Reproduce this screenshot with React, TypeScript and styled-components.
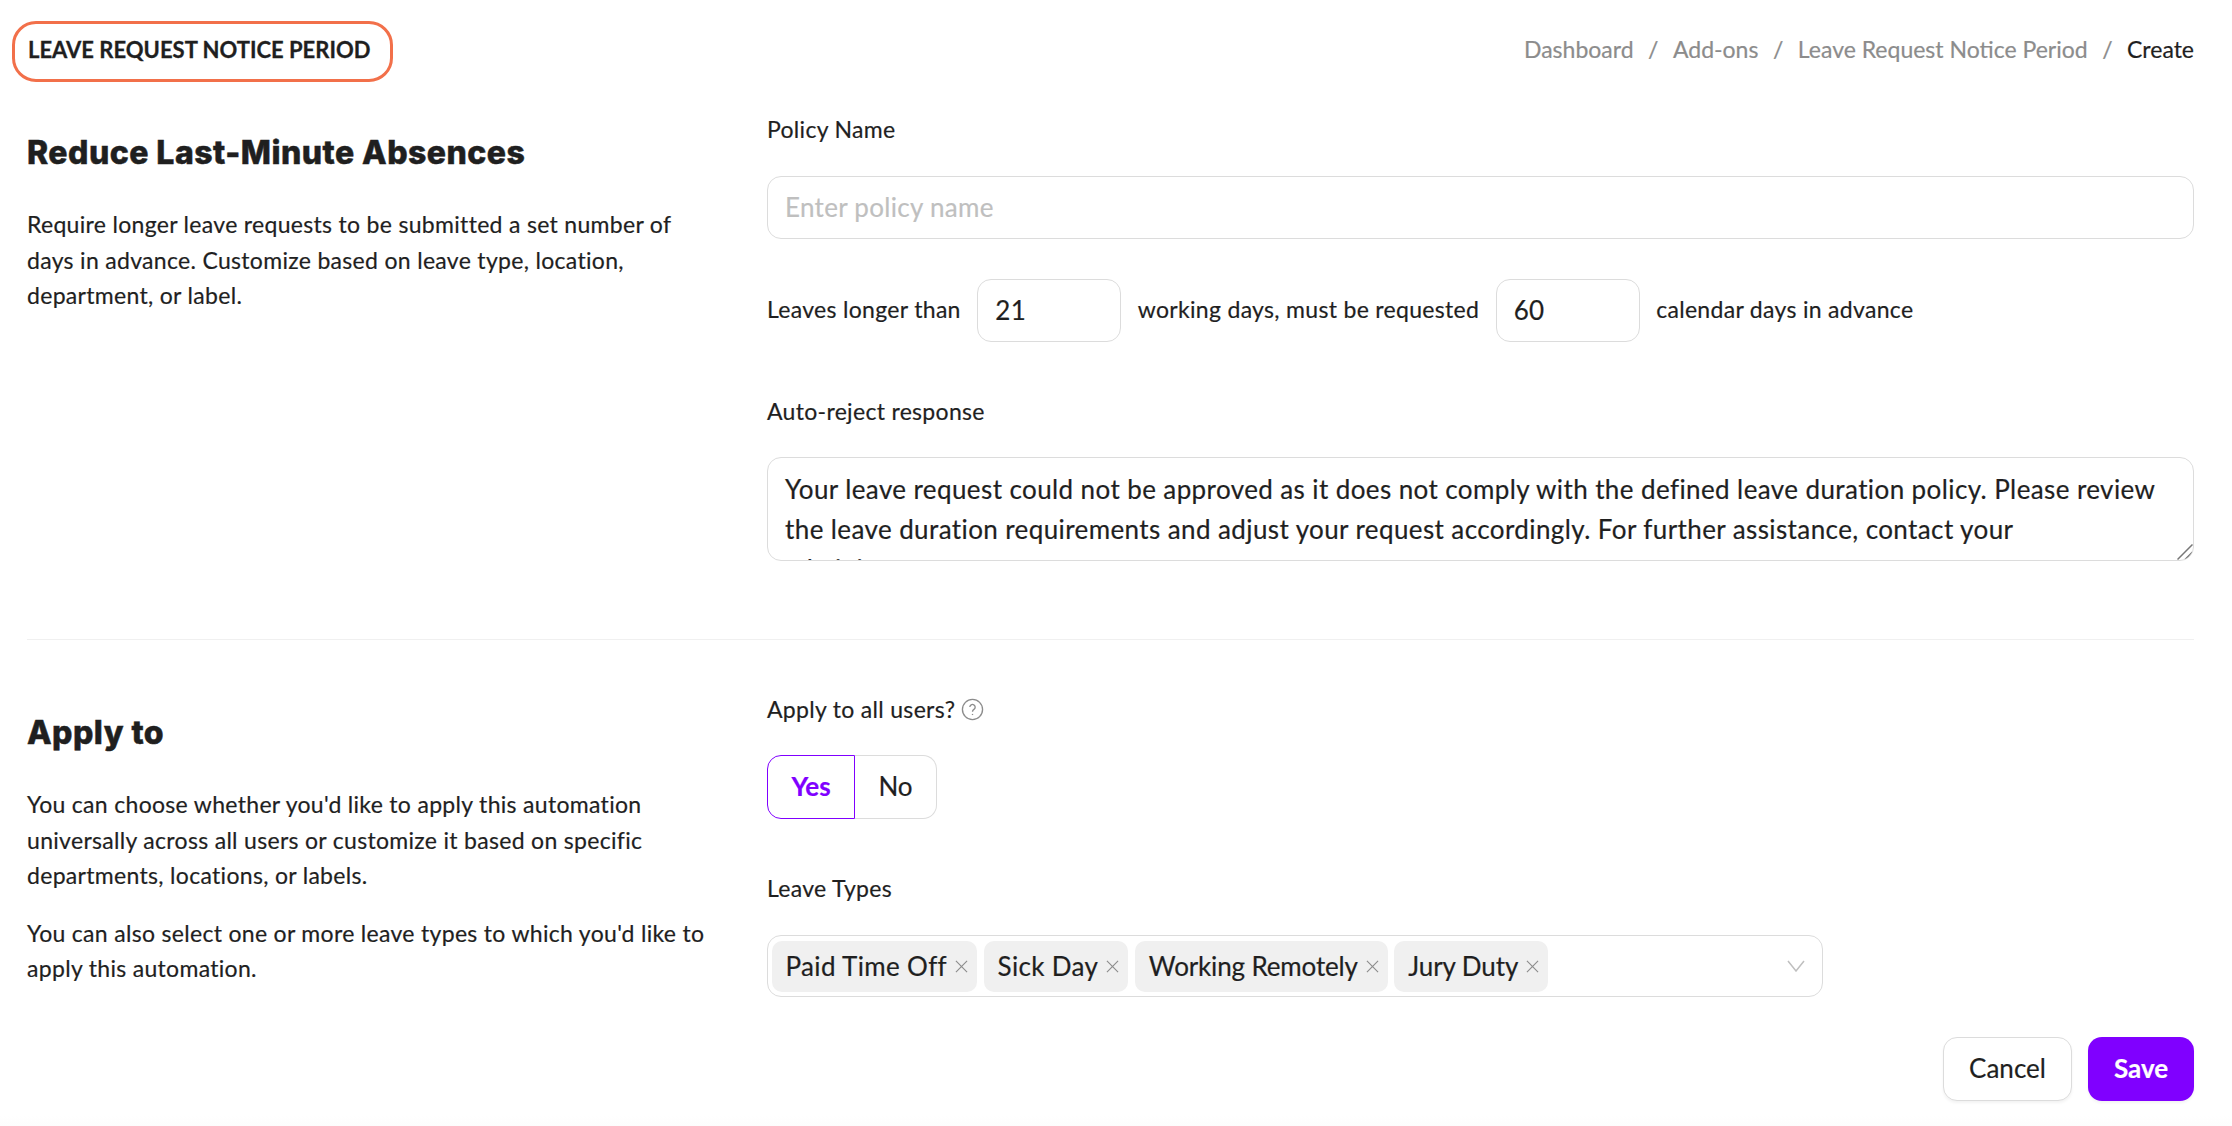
import React from "react";
import styled, { createGlobalStyle } from "styled-components";

const GlobalStyle = createGlobalStyle`
  * { box-sizing: border-box; }
  html, body { margin: 0; padding: 0; background: #fff; }
  body {
    font-family: "Lato", "Liberation Sans", sans-serif;
    color: #1f1f1f;
    -webkit-text-stroke: 0.2px currentColor;
  }
`;

const Page = styled.div`
  width: 2232px;
  height: 1126px;
  padding: 21px 38px 0 12px;
  overflow: hidden;
  background: linear-gradient(#fff 1116px, #fdfdfd);
`;

const Header = styled.div`
  display: flex;
  justify-content: space-between;
  align-items: center;
  height: 61px;
`;

const TitleBadge = styled.div`
  width: 381px;
  height: 61px;
  padding: 0 0 4px 13px;
  display: flex;
  align-items: center;
  border: 3px solid #f2704a;
  border-radius: 24px;
  font-size: 22px;
  font-weight: 700;
  white-space: nowrap;
  -webkit-text-stroke: 0.3px currentColor;
`;

const Breadcrumbs = styled.div`
  display: flex;
  align-items: center;
  gap: 14.5px;
  padding-bottom: 5px;
  font-size: 23px;
  color: #8c8c8c;
`;

const Crumb = styled.span<{ $current?: boolean }>`
  color: ${(p) => (p.$current ? "#1f1f1f" : "#8c8c8c")};
`;

const Section = styled.div`
  display: grid;
  grid-template-columns: 740px 1fr;
  margin-left: 15px;
`;

const FirstSection = styled(Section)`
  padding-top: 34px;
  padding-bottom: 78px;
  border-bottom: 1px solid #f0f0f0;
`;

const SecondSection = styled(Section)`
  padding-top: 56px;
`;

const Intro = styled.div`
  width: 684px;
  padding-top: 15px;
`;

const Heading = styled.h2`
  margin: 0;
  font-family: "Inter", "Liberation Sans", sans-serif;
  font-size: 32px;
  line-height: 44px;
  font-weight: 800;
  letter-spacing: 0.47px;
  -webkit-text-stroke: 0.5px currentColor;
`;

const Copy = styled.p`
  margin: 0 0 22px;
  font-size: 23px;
  line-height: 35.5px;
  letter-spacing: 0.31px;
`;

const FirstCopy = styled(Copy)`
  margin-top: 32px;
`;

const Form = styled.div`
  display: flex;
  flex-direction: column;
`;

const Label = styled.label`
  display: block;
  margin-bottom: 3px;
  font-size: 23px;
  line-height: 27px;
  letter-spacing: 0.31px;
`;

const Field = styled.div`
  height: 63px;
  padding: 0 17px 2px;
  display: flex;
  align-items: center;
  border: 1.5px solid #dcdcdc;
  border-radius: 14px;
  font-size: 26px;
  letter-spacing: 0.3px;
`;

const NameField = styled(Field)`
  margin-top: 30px;
  color: #bfbfbf;
`;

const Sentence = styled.div`
  display: flex;
  align-items: center;
  gap: 16.5px;
  margin-top: 40px;
  font-size: 23px;
  letter-spacing: 0.31px;
`;

const SentenceText = styled.span`
  padding-bottom: 3px;
`;

const NumberField = styled(Field)`
  width: 144px;
`;

const ResponseLabel = styled(Label)`
  margin-top: 56px;
`;

const ResponseField = styled.div`
  position: relative;
  height: 104px;
  margin-top: 29px;
  padding: 11px 17px 0;
  overflow: hidden;
  border: 1.5px solid #dcdcdc;
  border-radius: 14px;
  font-size: 26px;
  line-height: 40px;
  letter-spacing: 0.4px;
`;

const ResizeGrip = styled.svg`
  position: absolute;
  right: 0;
  bottom: 0;
`;

const HelpRow = styled(Label)`
  display: flex;
  align-items: center;
  gap: 6px;
`;

const HelpIcon = styled.svg`
  -webkit-text-stroke: 0;
`;

const Toggle = styled.div`
  display: flex;
  margin-top: 29px;
`;

const ToggleOption = styled.div<{ $active?: boolean }>`
  height: 64px;
  padding-bottom: 3px;
  display: flex;
  align-items: center;
  justify-content: center;
  font-size: 26px;
  font-weight: ${(p) => (p.$active ? 700 : 400)};
  color: ${(p) => (p.$active ? "#8000ff" : "#1f1f1f")};
  width: ${(p) => (p.$active ? "88px" : "82px")};
  border: 1.5px solid ${(p) => (p.$active ? "#8000ff" : "#dcdcdc")};
  border-left-width: ${(p) => (p.$active ? "1.5px" : "0")};
  border-radius: ${(p) => (p.$active ? "14px 0 0 14px" : "0 14px 14px 0")};
`;

const TypesLabel = styled(Label)`
  margin-top: 56px;
`;

const SelectBox = styled.div`
  width: 1056px;
  height: 62px;
  margin-top: 30px;
  padding: 0 17px 0 3.5px;
  display: flex;
  align-items: center;
  gap: 6.5px;
  border: 1.5px solid #dcdcdc;
  border-radius: 14px;
`;

const Chip = styled.div<{ $tracking: number }>`
  height: 51px;
  padding: 0 9px 0 14px;
  display: flex;
  align-items: center;
  gap: 8px;
  background: #f0f0f0;
  border-radius: 10px;
  font-size: 26px;
  letter-spacing: ${(p) => p.$tracking}px;
`;

const Chevron = styled.svg`
  margin-left: auto;
`;

const Actions = styled.div`
  display: flex;
  justify-content: flex-end;
  gap: 16px;
  margin-top: 40px;
`;

const CancelButton = styled.button`
  width: 129px;
  height: 64px;
  padding: 0 0 2px;
  background: #fff;
  border: 1.5px solid #dcdcdc;
  border-radius: 14px;
  box-shadow: 0 2px 3px rgba(0, 0, 0, 0.05);
  font: 400 26px "Lato", sans-serif;
  color: #1f1f1f;
`;

const SaveButton = styled.button`
  width: 106px;
  height: 64px;
  padding: 0 0 2px;
  background: #8000ff;
  border: none;
  border-radius: 14px;
  box-shadow: 0 2px 3px rgba(0, 0, 0, 0.05);
  font: 700 26px "Lato", sans-serif;
  color: #fff;
`;

const chips = [
  { label: "Paid Time Off", tracking: 0.35 },
  { label: "Sick Day", tracking: 0.35 },
  { label: "Working Remotely", tracking: -0.15 },
  { label: "Jury Duty", tracking: -0.1 },
];

const App: React.FC = () => {
  return (
    <Page>
      <GlobalStyle />
      <Header>
        <TitleBadge>LEAVE REQUEST NOTICE PERIOD</TitleBadge>
        <Breadcrumbs>
          <Crumb>Dashboard</Crumb>
          <span>/</span>
          <Crumb>Add-ons</Crumb>
          <span>/</span>
          <Crumb>Leave Request Notice Period</Crumb>
          <span>/</span>
          <Crumb $current>Create</Crumb>
        </Breadcrumbs>
      </Header>

      <FirstSection>
        <Intro>
          <Heading>Reduce Last-Minute Absences</Heading>
          <FirstCopy>
            Require longer leave requests to be submitted a set number of days in advance. Customize
            based on leave type, location, department, or label.
          </FirstCopy>
        </Intro>
        <Form>
          <Label>Policy Name</Label>
          <NameField>Enter policy name</NameField>
          <Sentence>
            <SentenceText>Leaves longer than</SentenceText>
            <NumberField>21</NumberField>
            <SentenceText>working days, must be requested</SentenceText>
            <NumberField>60</NumberField>
            <SentenceText>calendar days in advance</SentenceText>
          </Sentence>
          <ResponseLabel>Auto-reject response</ResponseLabel>
          <ResponseField>
            Your leave request could not be approved as it does not comply with the defined leave
            duration policy. Please review the leave duration requirements and adjust your request
            accordingly. For further assistance, contact your administrator.
            <ResizeGrip width="16" height="16" viewBox="0 0 16 16">
              <path d="M.5 15.5 15.5.5M8 15.5 15.5 8" stroke="#777" strokeWidth="1.5" fill="none" />
            </ResizeGrip>
          </ResponseField>
        </Form>
      </FirstSection>

      <SecondSection>
        <Intro>
          <Heading>Apply to</Heading>
          <FirstCopy>
            You can choose whether you'd like to apply this automation universally across all users or
            customize it based on specific departments, locations, or labels.
          </FirstCopy>
          <Copy>
            You can also select one or more leave types to which you'd like to apply this automation.
          </Copy>
        </Intro>
        <Form>
          <HelpRow>
            Apply to all users?
            <HelpIcon width="23" height="23" viewBox="0 0 24 24" fill="none" stroke="#8c8c8c" strokeWidth="1.4">
              <circle cx="12" cy="12" r="10.5" />
              <path d="M9.2 9.5a2.8 2.8 0 1 1 4.3 2.4c-.9.6-1.5 1.2-1.5 2.4" />
              <path d="M12 16.6v1.2" />
            </HelpIcon>
          </HelpRow>
          <Toggle>
            <ToggleOption $active>Yes</ToggleOption>
            <ToggleOption>No</ToggleOption>
          </Toggle>
          <TypesLabel>Leave Types</TypesLabel>
          <SelectBox>
            {chips.map((chip) => (
              <Chip key={chip.label} $tracking={chip.tracking}>
                {chip.label}
                <svg width="13" height="13" viewBox="0 0 14 14" stroke="#8c8c8c" strokeWidth="1.2">
                  <path d="M1 1l12 12M13 1 1 13" />
                </svg>
              </Chip>
            ))}
            <Chevron width="18" height="12" viewBox="0 0 18 12" fill="none" stroke="#bfbfbf" strokeWidth="1.5">
              <path d="M1 1l8 10 8-10" />
            </Chevron>
          </SelectBox>
          <Actions>
            <CancelButton>Cancel</CancelButton>
            <SaveButton>Save</SaveButton>
          </Actions>
        </Form>
      </SecondSection>
    </Page>
  );
};

export default App;
